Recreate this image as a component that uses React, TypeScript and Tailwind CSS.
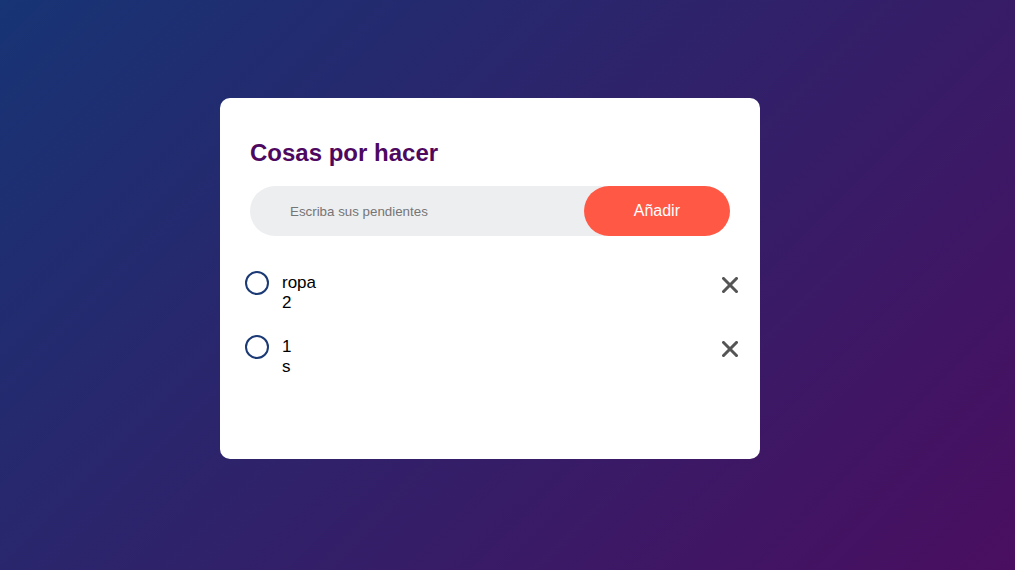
import { useState } from "react";

interface Task {
    id: number,
    lines: string[],
}

const initialTasks: Task[] = [
    { id: 1, lines: ["ropa", "2"] },
    { id: 2, lines: ["1", "s"] },
];

export default function App() {
    const [tasks, setTasks] = useState<Task[]>(initialTasks);
    const [text, setText] = useState("");

    return <div className="min-h-[570px] w-full bg-[linear-gradient(135deg,#173474,#4a0e60)] pt-[98px] font-['Liberation_Sans',Arial,sans-serif]">
        <div className="ml-[220px] w-[540px] rounded-[10px] bg-white px-[30px] pt-[40px] pb-[70px]">
            <h2 className="mb-[18px] text-[24px] font-bold leading-[30px] text-[#4e085f]">Cosas por hacer</h2>
            <div className="flex h-[50px] items-center rounded-[30px] bg-[#edeef0]">
                <input
                    value={text}
                    onChange={e => setText(e.target.value)}
                    placeholder="Escriba sus pendientes"
                    className="h-full min-w-0 flex-1 bg-transparent pl-[40px] text-[13.33px] text-black outline-none placeholder:text-[#757575]"
                />
                <button
                    onClick={() => {
                        if (!text.trim()) return;
                        setTasks([...tasks, { id: Date.now(), lines: [text] }]);
                        setText("");
                    }}
                    className="h-full rounded-[40px] bg-[#ff5945] px-[50px] text-[16px] text-white"
                >Añadir</button>
            </div>
            <ul className="mt-[25px]">
                {tasks.map(t => <li key={t.id} className="-ml-[5px] -mr-[20px] flex items-start py-3">
                    <div className="-mt-[2px] h-6 w-6 shrink-0 rounded-full border-2 border-[#1b3a75]" />
                    <div className="ml-[13px] flex-1 text-[17px] leading-[20px] text-black">
                        {t.lines.map((l, i) => <div key={i}>{l}</div>)}
                    </div>
                    <button
                        onClick={() => setTasks(tasks.filter(x => x.id !== t.id))}
                        className="-mt-2 flex h-10 w-10 items-center justify-center"
                    >
                        <svg width="16" height="16" viewBox="0 0 16 16" stroke="#555" strokeWidth="3" strokeLinecap="square">
                            <line x1="1.5" y1="1.5" x2="14.5" y2="14.5" />
                            <line x1="14.5" y1="1.5" x2="1.5" y2="14.5" />
                        </svg>
                    </button>
                </li>)}
            </ul>
        </div>
    </div>
}
